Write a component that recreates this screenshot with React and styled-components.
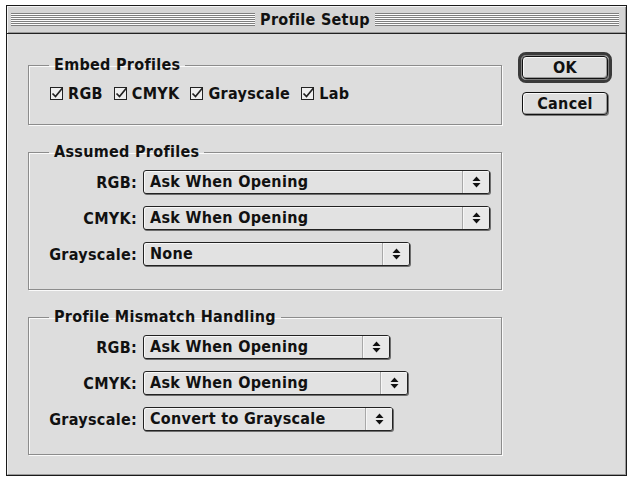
import React from 'react'
import styled, {createGlobalStyle} from 'styled-components'

const GlobalStyle = createGlobalStyle`
    html, body {
        margin: 0;
        padding: 0;
        background: #ffffff;
    }
    #root {
        padding: 5px 0 0 6px;
    }
`

const Window = styled.div`
    width: 619px;
    height: 469px;
    border: 1px solid #1a1a1a;
    background: #dddddd;
    display: flex;
    flex-direction: column;
    font-family: "DejaVu Sans Condensed", "DejaVu Sans", sans-serif;
    font-weight: bold;
    font-size: 16px;
    color: #111111;
`

const TitleBar = styled.div`
    height: 27px;
    flex: none;
    display: flex;
    align-items: center;
    padding: 0 7px 0 4px;
    background: #d4d4d4;
    border-bottom: 1px solid #222222;
    box-shadow: inset 1px 1px 0 #f4f4f4, inset -1px -1px 0 #999999;
`

const Stripes = styled.div`
    flex: 1;
    height: 13px;
    background: repeating-linear-gradient(
        to bottom,
        #7e7e7e 0,
        #7e7e7e 1px,
        #fbfbfb 1px,
        #fbfbfb 2px
    );
`

const Title = styled.div`
    padding: 0 5px;
    font-size: 16px;
    line-height: 18px;
    letter-spacing: 0.3px;
`

const Body = styled.div`
    flex: 1;
    display: flex;
    padding: 22px 13px 0 20px;
    border-left: 1px solid #f2f2f2;
    border-right: 1px solid #9a9a9a;
    border-bottom: 1px solid #9a9a9a;
`

const LeftColumn = styled.div`
    width: 474px;
    display: flex;
    flex-direction: column;
    gap: 18px;
`

const Group = styled.fieldset`
    margin: 0;
    padding: ${props => props.$pad};
    border: 1px solid #8c8c8c;
    box-shadow: 1px 1px 0 #fafafa, inset 1px 1px 0 #fafafa;
    min-width: 0;
`

const Legend = styled.legend`
    margin-left: 20px;
    padding: 0 5px;
    line-height: 18px;
    letter-spacing: 0.3px;
`

const CheckRow = styled.div`
    display: flex;
    align-items: center;
    gap: 11px;
    height: 18px;
    padding-left: 21px;
`

const CheckItem = styled.label`
    display: flex;
    align-items: center;
    gap: 4px;
    letter-spacing: 0.3px;
`

const Rows = styled.div`
    display: grid;
    grid-template-columns: 108px auto;
    column-gap: 6px;
    row-gap: 12px;
    align-items: center;
    justify-items: start;
`

const Label = styled.span`
    justify-self: end;
    letter-spacing: 0.3px;
`

const Select = styled.div`
    width: ${props => props.$width}px;
    height: 24px;
    box-sizing: border-box;
    display: flex;
    border: 1px solid #222222;
    border-radius: 3px;
    background: #e2e2e2;
    box-shadow: 1px 1px 0 #6e6e6e, inset 1px 1px 0 #f8f8f8;
`

const SelectText = styled.span`
    flex: 1;
    padding-left: 6px;
    line-height: 22px;
    letter-spacing: 0.3px;
    white-space: nowrap;
`

const ArrowBox = styled.span`
    width: 26px;
    display: flex;
    align-items: center;
    justify-content: center;
    border-left: 1px solid #a8a8a8;
    box-shadow: inset 1px 0 0 #f6f6f6, inset 0 1px 0 #f6f6f6;
    background: #e8e8e8;
    border-radius: 0 2px 2px 0;
`

const ButtonColumn = styled.div`
    width: 94px;
    margin-left: 16px;
    margin-top: -4px;
    display: flex;
    flex-direction: column;
    align-items: center;
    gap: 9px;
`

const DefaultRing = styled.div`
    border: 3px solid #3a3a3a;
    border-radius: 8px;
    padding: 1px;
    background: #cfcfcf;
    box-shadow: inset 1px 1px 0 #888888;
`

const Button = styled.button`
    width: 86px;
    height: 23px;
    margin: 0;
    padding: 0;
    border: 1px solid #111111;
    border-radius: 4px;
    background: #dedede;
    box-shadow: inset 1px 1px 0 #fafafa, inset -1px -1px 0 #9a9a9a, 1px 1px 0 #7a7a7a;
    font-family: inherit;
    font-weight: bold;
    font-size: 16px;
    letter-spacing: 0.3px;
    color: #111111;
`

const CheckBox = () => (
    <svg width="14" height="14" viewBox="0 0 14 14">
        <rect x="0.5" y="1.5" width="12" height="12" fill="#eeeeee" stroke="#222222" />
        <path d="M2.5 7.5 L5.5 10.5 L12.5 2" fill="none" stroke="#222222" strokeWidth="1.7" />
    </svg>
)

const Arrows = () => (
    <svg width="9" height="12" viewBox="0 0 9 12">
        <path d="M4.5 0.5 L8.5 5 L0.5 5 Z" fill="#111111" />
        <path d="M0.5 7 L8.5 7 L4.5 11.5 Z" fill="#111111" />
    </svg>
)

const Popup = ({width, value}) => (
    <Select $width={width}>
        <SelectText>{value}</SelectText>
        <ArrowBox><Arrows /></ArrowBox>
    </Select>
)

const assumed = [
    {label: 'RGB:', value: 'Ask When Opening', width: 347},
    {label: 'CMYK:', value: 'Ask When Opening', width: 347},
    {label: 'Grayscale:', value: 'None', width: 267},
]

const mismatch = [
    {label: 'RGB:', value: 'Ask When Opening', width: 247},
    {label: 'CMYK:', value: 'Ask When Opening', width: 265},
    {label: 'Grayscale:', value: 'Convert to Grayscale', width: 250},
]

const PopupRows = ({rows}) => (
    <Rows>
        {rows.map(row => (
            <React.Fragment key={row.label}>
                <Label>{row.label}</Label>
                <Popup width={row.width} value={row.value} />
            </React.Fragment>
        ))}
    </Rows>
)

const App = () => {
    return (
        <>
            <GlobalStyle />
            <Window>
                <TitleBar>
                    <Stripes />
                    <Title>Profile Setup</Title>
                    <Stripes />
                </TitleBar>
                <Body>
                    <LeftColumn>
                        <Group $pad="10px 0 22px 0">
                            <Legend>Embed Profiles</Legend>
                            <CheckRow>
                                {['RGB', 'CMYK', 'Grayscale', 'Lab'].map(name => (
                                    <CheckItem key={name}>
                                        <CheckBox />
                                        {name}
                                    </CheckItem>
                                ))}
                            </CheckRow>
                        </Group>
                        <Group $pad="9px 0 23px 0">
                            <Legend>Assumed Profiles</Legend>
                            <PopupRows rows={assumed} />
                        </Group>
                        <Group $pad="9px 0 23px 0">
                            <Legend>Profile Mismatch Handling</Legend>
                            <PopupRows rows={mismatch} />
                        </Group>
                    </LeftColumn>
                    <ButtonColumn>
                        <DefaultRing>
                            <Button>OK</Button>
                        </DefaultRing>
                        <Button>Cancel</Button>
                    </ButtonColumn>
                </Body>
            </Window>
        </>
    )
}

export default App
